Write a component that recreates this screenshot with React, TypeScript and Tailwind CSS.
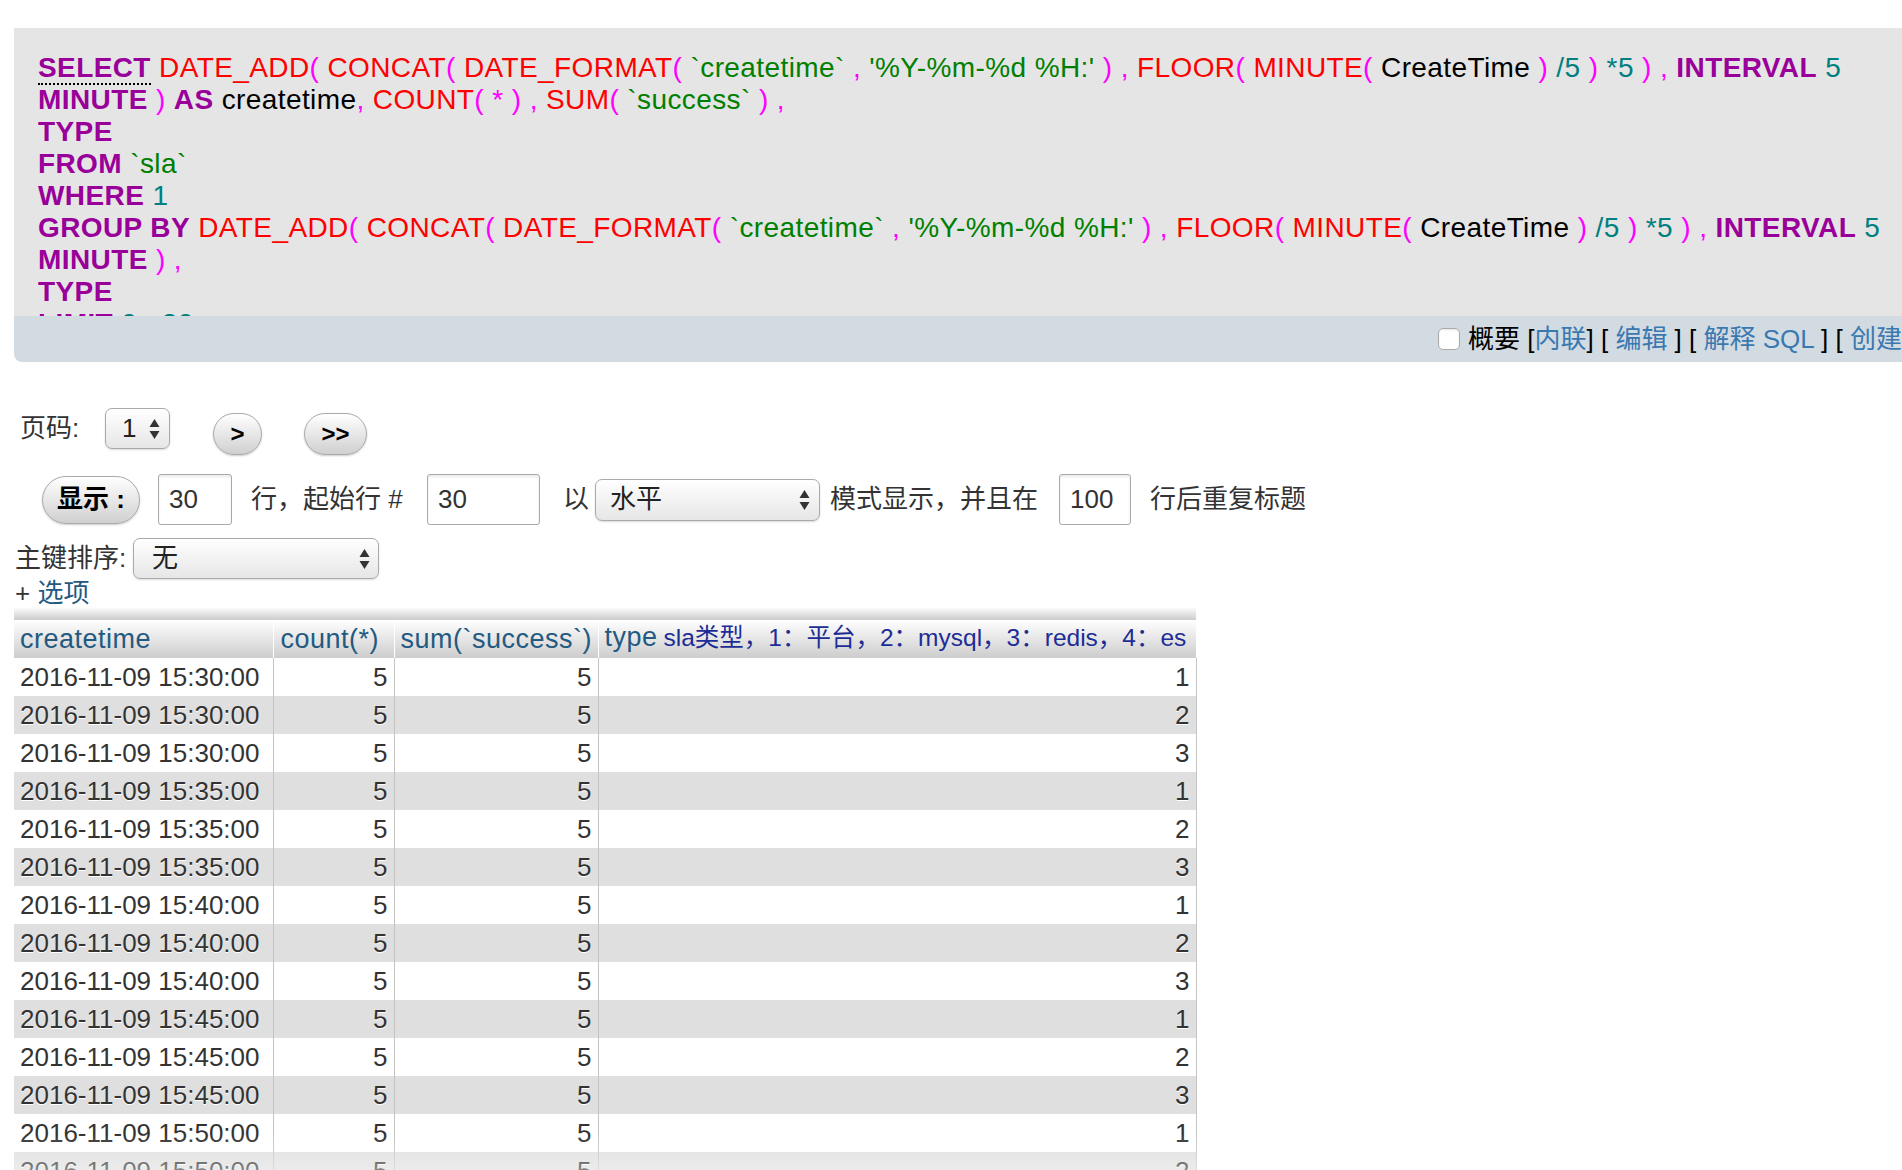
import React from "react";

type Tok = [string, string];

const tokClass: Record<string, string> = {
  k: "font-bold text-[#990099]",
  f: "text-[#ff0000]",
  p: "text-[#ff00ff]",
  s: "text-[#008000]",
  n: "text-[#008080]",
  i: "text-black",
};

const dateAdd: Tok[] = [
  ["f", "DATE_ADD"],
  ["p", "( "],
  ["f", "CONCAT"],
  ["p", "( "],
  ["f", "DATE_FORMAT"],
  ["p", "( "],
  ["s", "`createtime`"],
  ["i", " "],
  ["p", ", "],
  ["s", "'%Y-%m-%d %H:'"],
  ["i", " "],
  ["p", ") , "],
  ["f", "FLOOR"],
  ["p", "( "],
  ["f", "MINUTE"],
  ["p", "( "],
  ["i", "CreateTime"],
  ["i", " "],
  ["p", ") "],
  ["n", "/5"],
  ["i", " "],
  ["p", ") "],
  ["n", "*5"],
  ["i", " "],
  ["p", ") , "],
  ["k", "INTERVAL"],
  ["i", " "],
  ["n", "5"],
];

const sqlLines: Tok[][] = [
  [["u", "SELECT"], ["i", " "], ...dateAdd],
  [
    ["k", "MINUTE"],
    ["i", " "],
    ["p", ") "],
    ["k", "AS"],
    ["i", " "],
    ["i", "createtime"],
    ["p", ", "],
    ["f", "COUNT"],
    ["p", "( * ) , "],
    ["f", "SUM"],
    ["p", "( "],
    ["s", "`success`"],
    ["i", " "],
    ["p", ") ,"],
  ],
  [["k", "TYPE"]],
  [["k", "FROM"], ["i", " "], ["s", "`sla`"]],
  [["k", "WHERE"], ["i", " "], ["n", "1"]],
  [["k", "GROUP BY"], ["i", " "], ...dateAdd],
  [["k", "MINUTE"], ["i", " "], ["p", ") ,"]],
  [["k", "TYPE"]],
  [["k", "LIMIT"], ["i", " "], ["n", "0"], ["i", " "], ["p", ", "], ["n", "30"]],
];

const rows: [string, number][] = [
  ["15:30:00", 1],
  ["15:30:00", 2],
  ["15:30:00", 3],
  ["15:35:00", 1],
  ["15:35:00", 2],
  ["15:35:00", 3],
  ["15:40:00", 1],
  ["15:40:00", 2],
  ["15:40:00", 3],
  ["15:45:00", 1],
  ["15:45:00", 2],
  ["15:45:00", 3],
  ["15:50:00", 1],
  ["15:50:00", 2],
  ["15:50:00", 3],
];

function Arrows() {
  return (
    <svg width="11" height="22" viewBox="0 0 11 22" className="shrink-0">
      <polygon points="0.5,9 5.5,1 10.5,9" fill="#333" />
      <polygon points="0.5,13 10.5,13 5.5,21" fill="#333" />
    </svg>
  );
}

function Select({ value, className }: { value: string; className: string }) {
  return (
    <div
      className={
        "flex shrink-0 items-center justify-between rounded-[7px] border border-[#aaa] bg-linear-to-b from-white to-[#e6e6e6] shadow-[0_1px_2px_rgba(0,0,0,0.15)] text-[26px] text-[#222] " +
        className
      }
    >
      <span>{value}</span>
      <Arrows />
    </div>
  );
}

function PillButton({ children, className }: { children: React.ReactNode; className: string }) {
  return (
    <div
      className={
        "flex shrink-0 items-center justify-center rounded-full border border-[#aaa] bg-linear-to-b from-white to-[#d0d0d0] font-bold text-black shadow-[0_1px_2px_rgba(0,0,0,0.2)] " +
        className
      }
    >
      {children}
    </div>
  );
}

function TextInput({ value, className }: { value: string; className: string }) {
  return (
    <div
      className={
        "flex shrink-0 items-center rounded-[3px] border border-[#aaa] bg-white pl-[10px] text-[26px] text-[#333] shadow-[inset_0_2px_3px_rgba(0,0,0,0.08)] " +
        className
      }
    >
      {value}
    </div>
  );
}

export default function App() {
  return (
    <div className="relative w-[1902px] h-[1170px] overflow-hidden bg-white font-['Liberation_Sans','Noto_Sans_CJK_SC',sans-serif] text-[#333]">
      {/* SQL query box */}
      <div className="ml-[14px] mt-[28px] w-[2200px] overflow-hidden rounded-bl-[8px]">
        <div className="h-[288px] overflow-hidden bg-[#e5e5e5] pl-[24px] pt-[24px] text-[28px] leading-[32px] tracking-[0.4px]">
          {sqlLines.map((line, li) => (
            <div key={li} className="whitespace-pre">
              {line.map(([t, text], ti) =>
                t === "u" ? (
                  <span
                    key={ti}
                    className="font-bold text-[#990099] border-b-2 border-dotted border-black"
                  >
                    {text}
                  </span>
                ) : (
                  <span key={ti} className={tokClass[t]}>
                    {text}
                  </span>
                )
              )}
            </div>
          ))}
        </div>
        <div className="flex h-[46px] items-center bg-[#d3dbe2] pl-[1424px] text-[26px] text-black">
          <div className="h-[22px] w-[22px] shrink-0 rounded-[5px] border border-[#aaa] bg-white shadow-[inset_0_1px_2px_rgba(0,0,0,0.1)]" />
          <div className="ml-[8px] shrink-0 whitespace-pre">
            <span>概要 [</span>
            <span className="text-[#3a79b0]">内联</span>
            <span>] [ </span>
            <span className="text-[#3a79b0]">编辑</span>
            <span> ] [ </span>
            <span className="text-[#3a79b0]">解释 SQL</span>
            <span> ] [ </span>
            <span className="text-[#3a79b0]">创建 PHP 代码</span>
            <span> ] [ </span>
            <span className="text-[#3a79b0]">刷新</span>
            <span> ]</span>
          </div>
        </div>
      </div>

      {/* Paging */}
      <div className="mt-[46px] flex h-[47px] items-start text-[26px]">
        <span className="ml-[20px] w-[60px] shrink-0 whitespace-nowrap leading-[41px] text-[#333]">页码:</span>
        <Select value="1" className="ml-[25px] h-[41px] w-[65px] pl-[16px] pr-[9px]" />
        <PillButton className="ml-[43px] mt-[5px] h-[42px] w-[49px] text-[24px]">&gt;</PillButton>
        <PillButton className="ml-[42px] mt-[5px] h-[42px] w-[63px] text-[24px]">&gt;&gt;</PillButton>
      </div>

      {/* Display options */}
      <div className="mt-[19px] flex h-[51px] items-center text-[26px]">
        <PillButton className="ml-[42px] h-[48px] w-[98px] text-[26px]">显示 :</PillButton>
        <TextInput value="30" className="ml-[18px] h-[51px] w-[74px]" />
        <span className="ml-[19px] w-[157px] shrink-0 whitespace-nowrap">行，起始行 #</span>
        <TextInput value="30" className="ml-[19px] h-[51px] w-[113px]" />
        <span className="ml-[23px] w-[26px] shrink-0">以</span>
        <Select value="水平" className="ml-[6px] h-[42px] w-[225px] pl-[14px] pr-[9px]" />
        <span className="ml-[10px] w-[208px] shrink-0 whitespace-nowrap">模式显示，并且在</span>
        <TextInput value="100" className="ml-[21px] h-[51px] w-[72px]" />
        <span className="ml-[19px] shrink-0 whitespace-nowrap">行后重复标题</span>
      </div>

      {/* Sort by key */}
      <div className="mt-[13px] flex h-[41px] items-center text-[26px]">
        <span className="ml-[15px] w-[113px] shrink-0 whitespace-nowrap">主键排序:</span>
        <Select value="无" className="ml-[5px] h-[41px] w-[246px] pl-[18px] pr-[8px]" />
      </div>
      <div className="flex h-[28px] items-center whitespace-pre pl-[15px] text-[26px] leading-[28px]">
        <span className="text-[#333]">+ </span>
        <span className="text-[#235a81]">选项</span>
      </div>

      {/* Results table */}
      <div className="ml-[14px] h-[13px] w-[1182px] bg-linear-to-b from-white to-[#cccccc]" />
      <table className="ml-[14px] w-[1182px] table-fixed border-collapse">
        <colgroup>
          <col className="w-[259px]" />
          <col className="w-[121px]" />
          <col className="w-[204px]" />
          <col className="w-[598px]" />
        </colgroup>
        <thead>
          <tr className="h-[37px] bg-linear-to-b from-white to-[#cdcdcd]">
            <th className="px-[6px] py-0 text-left text-[27px] leading-[35px] font-normal tracking-[0.5px] text-[#235a81] whitespace-nowrap">
              createtime
            </th>
            <th className="border-l border-white px-[7px] py-0 text-left text-[27px] leading-[35px] font-normal tracking-[0.5px] text-[#235a81] whitespace-nowrap">
              count(*)
            </th>
            <th className="border-l border-white px-[6px] py-0 text-left text-[27px] leading-[35px] font-normal tracking-[0.5px] text-[#235a81] whitespace-nowrap">
              sum(`success`)
            </th>
            <th className="border-l border-white px-[6px] py-0 text-left leading-[35px] font-normal whitespace-nowrap overflow-hidden">
              <span className="text-[27px] tracking-[0.5px] text-[#235a81]">type</span>
              <span className="ml-[6px] text-[24.5px] text-[#1d2d96]">sla类型，1：平台，2：mysql，3：redis，4：es</span>
            </th>
          </tr>
        </thead>
        <tbody>
          {rows.map(([time, type], i) => (
            <tr key={i} className={"h-[38px] " + (i % 2 === 0 ? "bg-white" : "bg-[#dfdfdf]")}>
              <td className="px-[6px] py-0 text-[26px] leading-[36px] text-[#333] whitespace-nowrap [text-shadow:0_1px_0_#fff]">
                2016-11-09 {time}
              </td>
              <td className="border-l border-[#c4c4c4] px-[6px] py-0 text-right text-[26px] leading-[36px] text-[#333] [text-shadow:0_1px_0_#fff]">
                5
              </td>
              <td className="border-l border-[#c4c4c4] px-[6px] py-0 text-right text-[26px] leading-[36px] text-[#333] [text-shadow:0_1px_0_#fff]">
                5
              </td>
              <td className="border-x border-[#c4c4c4] px-[6px] py-0 text-right text-[26px] leading-[36px] text-[#333] [text-shadow:0_1px_0_#fff]">
                {type}
              </td>
            </tr>
          ))}
        </tbody>
      </table>

      {/* bottom fade */}
      <div className="pointer-events-none absolute bottom-0 left-0 right-0 h-[36px] bg-linear-to-b from-transparent to-white/40" />
    </div>
  );
}
